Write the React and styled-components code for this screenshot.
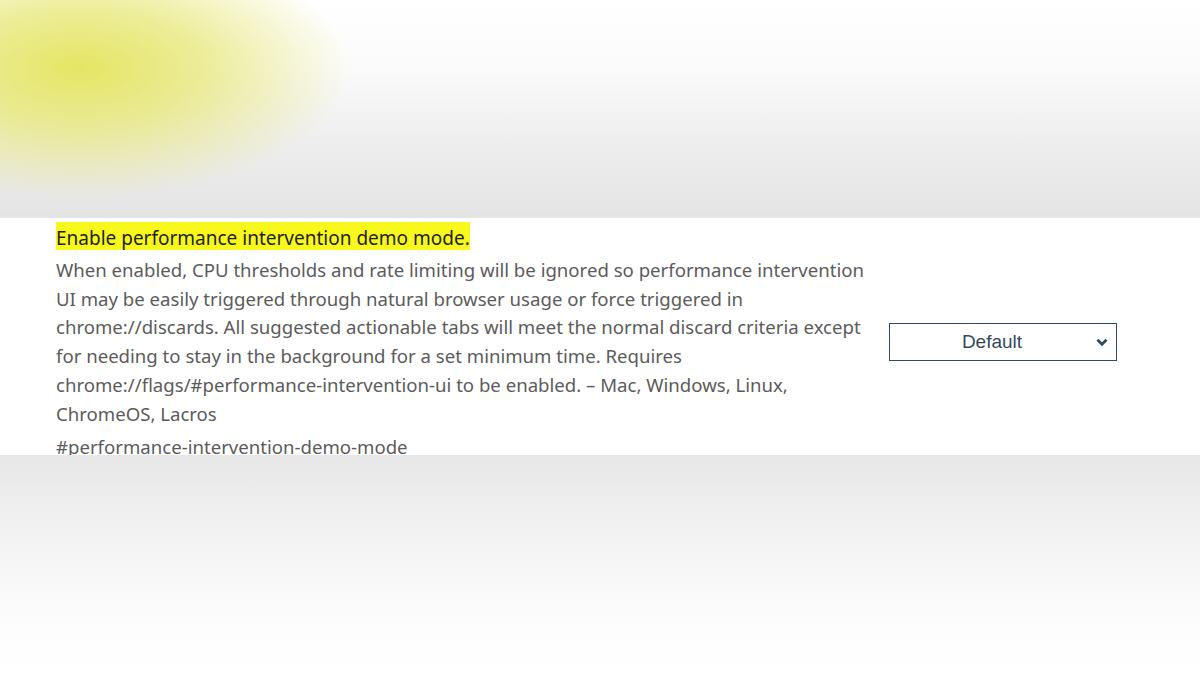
import styled, { createGlobalStyle } from 'styled-components';

const GlobalStyle = createGlobalStyle`
  html, body {
    margin: 0;
    padding: 0;
    background: #ffffff;
  }
  body {
    font-family: "Noto Sans", "Open Sans", sans-serif;
  }
`;

const Page = styled.main`
  width: 1200px;
  height: 675px;
  overflow: hidden;
  display: flex;
  flex-direction: column;
`;

const BlurBand = styled.div`
  height: ${(p) => p.$height}px;
  flex-shrink: 0;
  background: ${(p) => p.$bg};
`;

const Entry = styled.section`
  height: 237px;
  flex-shrink: 0;
  background: #ffffff;
  display: flex;
  align-items: flex-start;
  padding: 4px 0 0 56px;
  box-sizing: border-box;
`;

const TextCol = styled.div`
  width: 833px;
  display: flex;
  flex-direction: column;
`;

const Title = styled.h3`
  margin: 0 0 6px;
  padding-top: 4px;
  align-self: flex-start;
  background: #f8f81c;
  color: #1f1f1f;
  font-size: 19px;
  font-weight: 400;
  line-height: 24px;
`;

const Description = styled.p`
  margin: 0;
  color: #5b5b5b;
  font-size: 18.6px;
  line-height: 28.7px;
  white-space: nowrap;
`;

const Permalink = styled.div`
  margin-top: 5px;
  color: #5b5b5b;
  font-size: 18.6px;
  line-height: 28px;
`;

const SelectBox = styled.div`
  margin-top: 101px;
  width: 228px;
  height: 38px;
  box-sizing: border-box;
  border: 1px solid #2e4d63;
  display: flex;
  align-items: center;
  position: relative;
  color: #34495e;
  font-family: "Liberation Sans", Arial, sans-serif;
  font-size: 19px;
`;

const SelectLabel = styled.span`
  flex: 1;
  text-align: center;
  padding-right: 22px;
`;

const Chevron = styled.svg`
  position: absolute;
  right: 8px;
  top: 14px;
`;

const topBg = `
  radial-gradient(ellipse 270px 130px at 80px 68px, rgba(228,228,92,0.95) 0%, rgba(230,230,110,0.7) 45%, rgba(235,235,150,0) 100%),
  linear-gradient(to bottom, #ffffff 0%, #fbfbfb 30%, #eeeeee 65%, #e4e4e4 100%)
`;

const bottomBg = `
  linear-gradient(to bottom, #e7e7e7 0%, #efefef 25%, #f8f8f8 55%, #fdfdfd 80%, #ffffff 100%)
`;

export default function App() {
  return (
    <>
      <GlobalStyle />
      <Page>
        <BlurBand $height={218} $bg={topBg} />
        <Entry>
          <TextCol>
            <Title>Enable performance intervention demo mode.</Title>
            <Description>
              When enabled, CPU thresholds and rate limiting will be ignored so performance intervention
              <br />
              UI may be easily triggered through natural browser usage or force triggered in
              <br />
              chrome://discards. All suggested actionable tabs will meet the normal discard criteria except
              <br />
              for needing to stay in the background for a set minimum time. Requires
              <br />
              chrome://flags/#performance-intervention-ui to be enabled. – Mac, Windows, Linux,
              <br />
              ChromeOS, Lacros
            </Description>
            <Permalink>#performance-intervention-demo-mode</Permalink>
          </TextCol>
          <SelectBox>
            <SelectLabel>Default</SelectLabel>
            <Chevron width="12" height="9" viewBox="0 0 12 9">
              <path d="M1.5 1.8 L6 6.3 L10.5 1.8" fill="none" stroke="#2e4d63" strokeWidth="2.8" />
            </Chevron>
          </SelectBox>
        </Entry>
        <BlurBand $height={220} $bg={bottomBg} />
      </Page>
    </>
  );
}
